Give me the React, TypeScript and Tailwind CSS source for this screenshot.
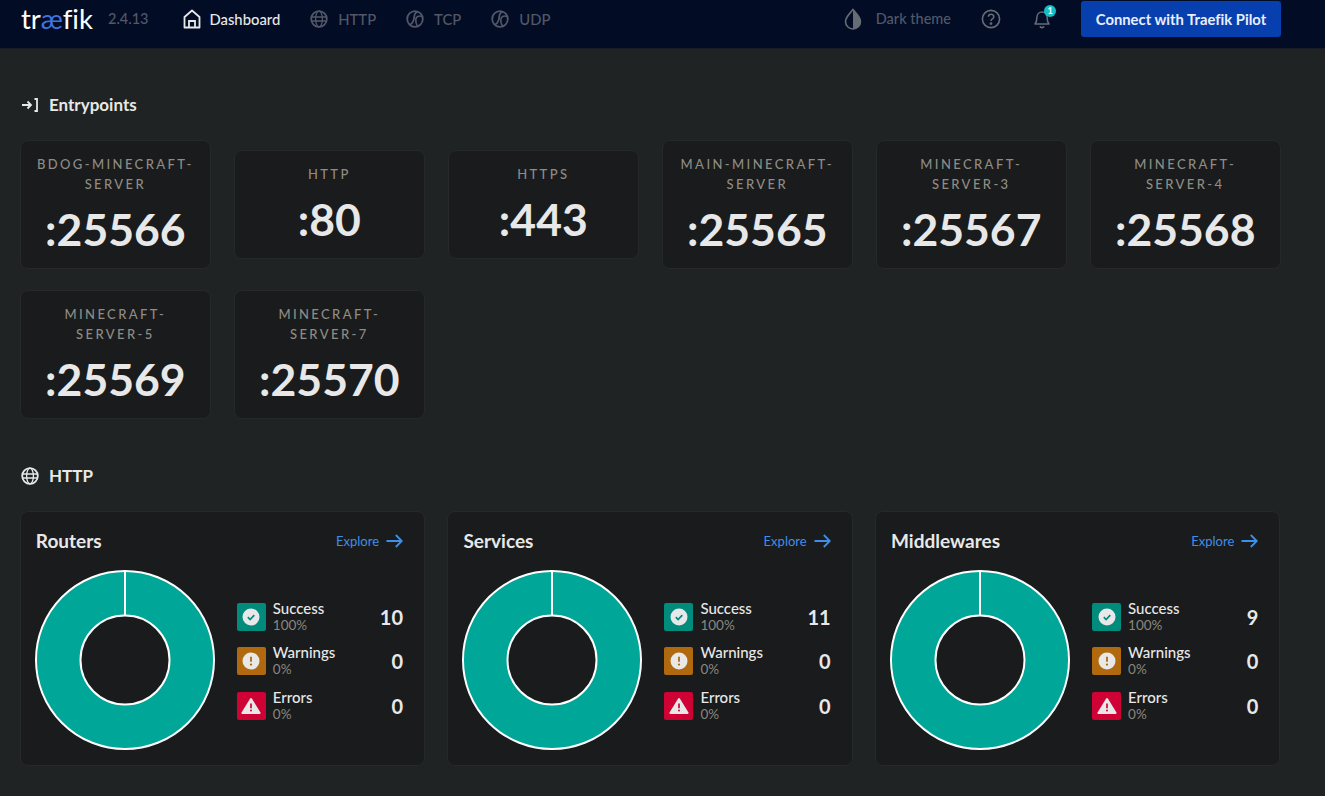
import React from "react";

const entry = [
  ["BDOG-MINECRAFT-SERVER", ":25566"],
  ["HTTP", ":80"],
  ["HTTPS", ":443"],
  ["MAIN-MINECRAFT-SERVER", ":25565"],
  ["MINECRAFT-SERVER-3", ":25567"],
  ["MINECRAFT-SERVER-4", ":25568"],
  ["MINECRAFT-SERVER-5", ":25569"],
  ["MINECRAFT-SERVER-7", ":25570"],
];

const Globe = ({ c = "currentColor", s = 18 }: { c?: string; s?: number }) => (
  <svg width={s} height={s} viewBox="0 0 18 18" fill="none" stroke={c} strokeWidth="1.8">
    <circle cx="9" cy="9" r="7.8" />
    <path d="M1.5 7h15M1.500 11h15" strokeWidth="1.3" />
    <ellipse cx="9" cy="9" rx="3.4" ry="7.8" strokeWidth="1.3" />
  </svg>
);

const Ball = () => (
  <svg width="18" height="18" viewBox="0 0 18 18" fill="none" stroke="currentColor" strokeWidth="1.8">
    <circle cx="9" cy="9" r="7.8" />
    <path d="M11.500 1.800C7 3 9 7 7.500 10.500 6.800 12.500 5.500 14 3.800 14.600" />
    <path d="M15.800 6.500C12.500 5.200 10 6.800 9.800 9.500 9.600 12 10 14 11.500 16" strokeWidth="1.6" />
  </svg>
);

const Donut = () => (
  <svg width="180" height="180" viewBox="0 0 182 182" className="shrink-0 -ml-[1px]">
    <circle cx="91" cy="91" r="67.5" fill="none" stroke="#ffffff" strokeWidth="47" />
    <circle cx="91" cy="91" r="67.5" fill="none" stroke="#00a697" strokeWidth="43" />
    <path d="M91 1v45" stroke="#ffffff" strokeWidth="2" />
  </svg>
);

const Status = ({ kind, label, pct, n }: { kind: string; label: string; pct: string; n: string }) => (
  <div className="flex items-center h-[44.5px]">
    <div
      className={
        "w-[29px] h-[28px] rounded-[2px] flex items-center justify-center shrink-0 " +
        (kind === "ok" ? "bg-[#008b7d]" : kind === "warn" ? "bg-[#b0690f]" : "bg-[#cf0236]")
      }
    >
      {kind === "ok" && (
        <svg width="18" height="18" viewBox="0 0 18 18">
          <circle cx="9" cy="9" r="8.5" fill="#e8e8e8" />
          <path d="M5.800 9.200l2.300 2.300 4.200-4.400" fill="none" stroke="#008b7d" strokeWidth="1.7" />
        </svg>
      )}
      {kind === "warn" && (
        <svg width="18" height="18" viewBox="0 0 18 18">
          <circle cx="9" cy="9" r="8.500" fill="#e8e8e8" />
          <path d="M9 4.800v5" stroke="#b0690f" strokeWidth="1.8" />
          <circle cx="9" cy="12.600" r="1.100" fill="#b0690f" />
        </svg>
      )}
      {kind === "err" && (
        <svg width="20" height="18" viewBox="0 0 20 18">
          <path d="M10 2L18.600 16H1.400z" fill="#e8e8e8" stroke="#e8e8e8" strokeWidth="2" strokeLinejoin="round" />
          <path d="M10 6.500v4.800" stroke="#cf0236" strokeWidth="1.7" />
          <circle cx="10" cy="13.600" r="1" fill="#cf0236" />
        </svg>
      )}
    </div>
    <div className="ml-[7px] flex-1">
      <div className="text-[15px] leading-[17px] font-medium text-[#e8e8e8]">{label}</div>
      <div className="text-[13.5px] leading-[17px] text-[#8b887f]">{pct}</div>
    </div>
    <div className="text-[20px] font-bold text-[#e8e8e8]">{n}</div>
  </div>
);

const Panel = ({ title, n }: { title: string; n: string }) => (
  <div className="h-[255px] rounded-[8px] bg-[#191b1d] border border-[#26292b] pl-[15px] pr-[21px] pt-[16px]">
    <div className="flex items-center justify-between h-[26px]">
      <span className="text-[19px] font-bold text-[#e8e8e8]">{title}</span>
      <span className="flex items-center gap-[7px] text-[13px] text-[#3f8fe8] mt-[1px]">
        Explore
        <svg width="17" height="14" viewBox="0 0 17 14" fill="none" stroke="currentColor" strokeWidth="1.8" className="-mt-[2px]">
          <path d="M0.500 7h15M9.800 1l6 6-6 6" />
        </svg>
      </span>
    </div>
    <div className="flex items-center mt-[16px]">
      <Donut />
      <div className="flex-1 ml-[22px] mt-[2px]">
        <Status kind="ok" label="Success" pct="100%" n={n} />
        <Status kind="warn" label="Warnings" pct="0%" n="0" />
        <Status kind="err" label="Errors" pct="0%" n="0" />
      </div>
    </div>
  </div>
);

const Nav = ({ icon, label, active }: { icon: React.ReactNode; label: string; active?: boolean }) => (
  <div className={"flex items-center text-[14.8px] font-medium " + (active ? "gap-[8px] text-[#e8e8e8]" : "gap-[10px] text-[#525868]")}>
    {icon}
    {label}
  </div>
);

export default function App() {
  return (
    <div className="w-[1325px] h-[796px] overflow-hidden bg-[#1f2324] font-['Lato','Open_Sans',sans-serif] [font-variant-ligatures:none]">
      <header className="h-[49px] bg-[#020c24] border-b border-[#161c26] flex items-center pl-[21px] pr-[44px] pb-[10px]">
        <div className="text-[27.5px] font-normal leading-none text-white w-[87px]">
          tr<span className="text-[#3f74e0]">æ</span>fik
        </div>
        <span className="text-[14.5px] font-medium text-[#525868]">2.4.13</span>
        <div className="flex items-center gap-[30px] ml-[35px]">
          <Nav
            active
            label="Dashboard"
            icon={
              <svg width="18" height="20" viewBox="0 0 18 20" fill="none" stroke="#e8e8e8" strokeWidth="1.8">
                <path d="M1.500 18.500V8L9 1.500 16.500 8v10.500z" strokeLinejoin="round" />
                <path d="M6 18.500v-6.500h6v6.500" />
              </svg>
            }
          />
          <Nav label="HTTP" icon={<Globe />} />
          <Nav label="TCP" icon={<Ball />} />
          <Nav label="UDP" icon={<Ball />} />
        </div>
        <div className="ml-auto flex items-center">
          <svg width="18" height="22" viewBox="0 0 18 22" className="text-[#666b75]">
            <path d="M9 1.500C6 5.500 1.500 9 1.500 13.500a7.500 7.500 0 0 0 15 0C16.500 9 12 5.500 9 1.500z" fill="none" stroke="currentColor" strokeWidth="1.600" />
            <path d="M9 1.500C12 5.500 16.500 9 16.500 13.500A7.500 7.500 0 0 1 9 21z" fill="currentColor" />
          </svg>
          <span className="ml-[14px] text-[14.5px] font-medium text-[#525868]">Dark theme</span>
          <svg width="20" height="20" viewBox="0 0 20 20" fill="none" stroke="#666b75" strokeWidth="1.6" className="ml-[30px]">
            <circle cx="10" cy="10" r="8.600" />
            <path d="M7.400 7.800c0-3.400 5.400-3.400 5.400 0 0 2.200-2.800 2-2.800 4.200" />
            <circle cx="10" cy="14.600" r="0.600" fill="#666b75" />
          </svg>
          <div className="relative ml-[32px] mr-[30px]">
            <svg width="18" height="20" viewBox="0 0 18 20" fill="none" stroke="#666b75" strokeWidth="1.6" className="block">
              <path d="M2 15c1.600-1.600 1.800-3 1.800-6 0-3.400 2.200-6 5.200-6s5.200 2.600 5.200 6c0 3 .2 4.400 1.800 6z" strokeLinejoin="round" />
              <path d="M6.800 17.600c1 1.300 3.400 1.300 4.400 0" />
            </svg>
            <span className="absolute -top-[4px] -right-[5px] w-[12px] h-[12px] rounded-full bg-[#15bdc4] text-white text-[9px] leading-[12px] text-center font-bold">
              1
            </span>
          </div>
          <button className="w-[200px] h-[36px] rounded-[3px] bg-[#083fae] text-[#e8eefb] text-[14.8px] font-bold">
            Connect with Traefik Pilot
          </button>
        </div>
      </header>

      <main className="pl-[19.8px] w-[1301px]">
        <section>
          <div className="flex items-center gap-[10px] h-[24px] mt-[44px] ml-[1.2px] text-[17px] font-bold text-[#e8e8e8]">
            <svg width="18" height="14" viewBox="0 0 18 14" fill="none" stroke="#e8e8e8" strokeWidth="1.8">
              <path d="M1 7h9M6.500 3.500L10 7l-3.500 3.500M13.500 1H16v12h-2.500" />
            </svg>
            Entrypoints
          </div>
          <div className="grid grid-cols-6 gap-x-[22.8px] gap-y-[21px] items-center mt-[23px] w-[1261px]">
            {entry.map(([name, port]) => (
              <div key={name} className="rounded-[8px] bg-[#191b1d] border border-[#26292b] px-[14px] py-[13px] text-center">
                <div className="text-[13px] leading-[20px] tracking-[2.4px] font-medium text-[#8f8c83]">{name}</div>
                <div className="text-[44.5px] leading-[52px] font-bold text-[#e8e8e8] mt-[9px]">{port}</div>
              </div>
            ))}
          </div>
        </section>
        <section>
          <div className="flex items-center gap-[10px] h-[24px] mt-[45px] ml-[1.2px] text-[17px] font-bold text-[#e8e8e8]">
            <Globe c="#e8e8e8" />
            HTTP
          </div>
          <div className="grid grid-cols-3 gap-[22.4px] mt-[23px] w-[1260.5px]">
            <Panel title="Routers" n="10" />
            <Panel title="Services" n="11" />
            <Panel title="Middlewares" n="9" />
          </div>
        </section>
      </main>
    </div>
  );
}
